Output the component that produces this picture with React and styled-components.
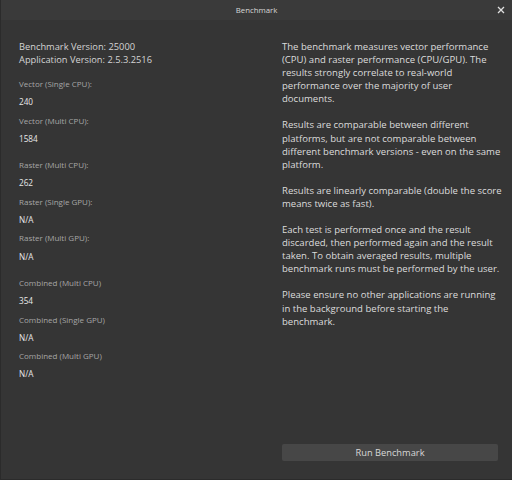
import * as React from "react"
import styled, { createGlobalStyle } from "styled-components"

const GlobalStyle = createGlobalStyle`
  html, body {
    margin: 0;
    padding: 0;
    background: #353535;
  }
  body {
    font-family: "Open Sans", "Noto Sans", sans-serif;
  }
`

const Window = styled.div`
  width: 512px;
  height: 480px;
  box-sizing: border-box;
  display: flex;
  flex-direction: column;
  background-color: #353535;
  border-left: 1px solid #2b2b2b;
  border-bottom: 1px solid #2b2b2b;
`

const TitleBar = styled.div`
  height: 20px;
  flex-shrink: 0;
  display: grid;
  grid-template-columns: 1fr auto 1fr;
  align-items: center;
  background-color: #3a3a3a;
`

const Title = styled.div`
  grid-column: 2;
  font-size: 7.8px;
  color: #d8d8d8;
`

const CloseButton = styled.div`
  grid-column: 3;
  justify-self: end;
  width: 20px;
  height: 20px;
  display: flex;
  align-items: center;
  justify-content: center;
  margin-right: 1px;
`

const Body = styled.div`
  flex: 1;
  display: flex;
  min-height: 0;
`

const LeftColumn = styled.div`
  width: 261px;
  flex-shrink: 0;
  box-sizing: border-box;
  padding: 20px 0 0 18px;
  display: flex;
  flex-direction: column;
`

const VersionLine = styled.div`
  font-size: 9.3px;
  line-height: 13px;
  color: #d4d4d4;
`

const Results = styled.div`
  margin-top: 9px;
  display: flex;
  flex-direction: column;
`

const Group = styled.div`
  display: flex;
  flex-direction: column;
  margin-bottom: 8px;
`

const Label = styled.div`
  font-size: 8px;
  line-height: 18.3px;
  color: #a6a6a6;
`

const Value = styled.div`
  font-size: 8.2px;
  line-height: 18.3px;
  color: #e8e8e8;
`

const RightColumn = styled.div`
  flex: 1;
  min-width: 0;
  box-sizing: border-box;
  padding: 20px 14px 18px 20px;
  display: flex;
  flex-direction: column;
`

const Paragraph = styled.p`
  margin: 0 0 13px 0;
  font-size: 9.55px;
  line-height: 13.1px;
  color: #dcdcdc;
  white-space: nowrap;
`

const RunButton = styled.button`
  margin-top: auto;
  height: 17px;
  border: none;
  border-radius: 2px;
  background-color: #474747;
  color: #d8d8d8;
  font-family: "Open Sans", "Noto Sans", sans-serif;
  font-size: 9.3px;
  padding: 0;
`

const groups = [
  [
    ["Vector (Single CPU):", "240"],
    ["Vector (Multi CPU):", "1584"],
  ],
  [
    ["Raster (Multi CPU):", "262"],
    ["Raster (Single GPU):", "N/A"],
    ["Raster (Multi GPU):", "N/A"],
  ],
  [
    ["Combined (Multi CPU)", "354"],
    ["Combined (Single GPU)", "N/A"],
    ["Combined (Multi GPU)", "N/A"],
  ],
]

const paragraphs = [
  [
    "The benchmark measures vector performance",
    "(CPU) and raster performance (CPU/GPU). The",
    "results strongly correlate to real-world",
    "performance over the majority of user",
    "documents.",
  ],
  [
    "Results are comparable between different",
    "platforms, but are not comparable between",
    "different benchmark versions - even on the same",
    "platform.",
  ],
  [
    "Results are linearly comparable (double the score",
    "means twice as fast).",
  ],
  [
    "Each test is performed once and the result",
    "discarded, then performed again and the result",
    "taken. To obtain averaged results, multiple",
    "benchmark runs must be performed by the user.",
  ],
  [
    "Please ensure no other applications are running",
    "in the background before starting the",
    "benchmark.",
  ],
]

const App = () => (
  <>
    <GlobalStyle />
    <Window>
      <TitleBar>
        <Title>Benchmark</Title>
        <CloseButton>
          <svg width="8" height="8" viewBox="0 0 8 8">
            <path d="M1 1L7 7M7 1L1 7" stroke="#e0e0e0" strokeWidth="1.3" />
          </svg>
        </CloseButton>
      </TitleBar>
      <Body>
        <LeftColumn>
          <VersionLine>Benchmark Version: 25000</VersionLine>
          <VersionLine>Application Version: 2.5.3.2516</VersionLine>
          <Results>
            {groups.map((group, i) => (
              <Group key={i}>
                {group.map(([label, value]) => (
                  <React.Fragment key={label}>
                    <Label>{label}</Label>
                    <Value>{value}</Value>
                  </React.Fragment>
                ))}
              </Group>
            ))}
          </Results>
        </LeftColumn>
        <RightColumn>
          {paragraphs.map((lines, i) => (
            <Paragraph key={i}>
              {lines.map((line, j) => (
                <React.Fragment key={j}>
                  {line}
                  {j < lines.length - 1 && <br />}
                </React.Fragment>
              ))}
            </Paragraph>
          ))}
          <RunButton>Run Benchmark</RunButton>
        </RightColumn>
      </Body>
    </Window>
  </>
)

export default App
